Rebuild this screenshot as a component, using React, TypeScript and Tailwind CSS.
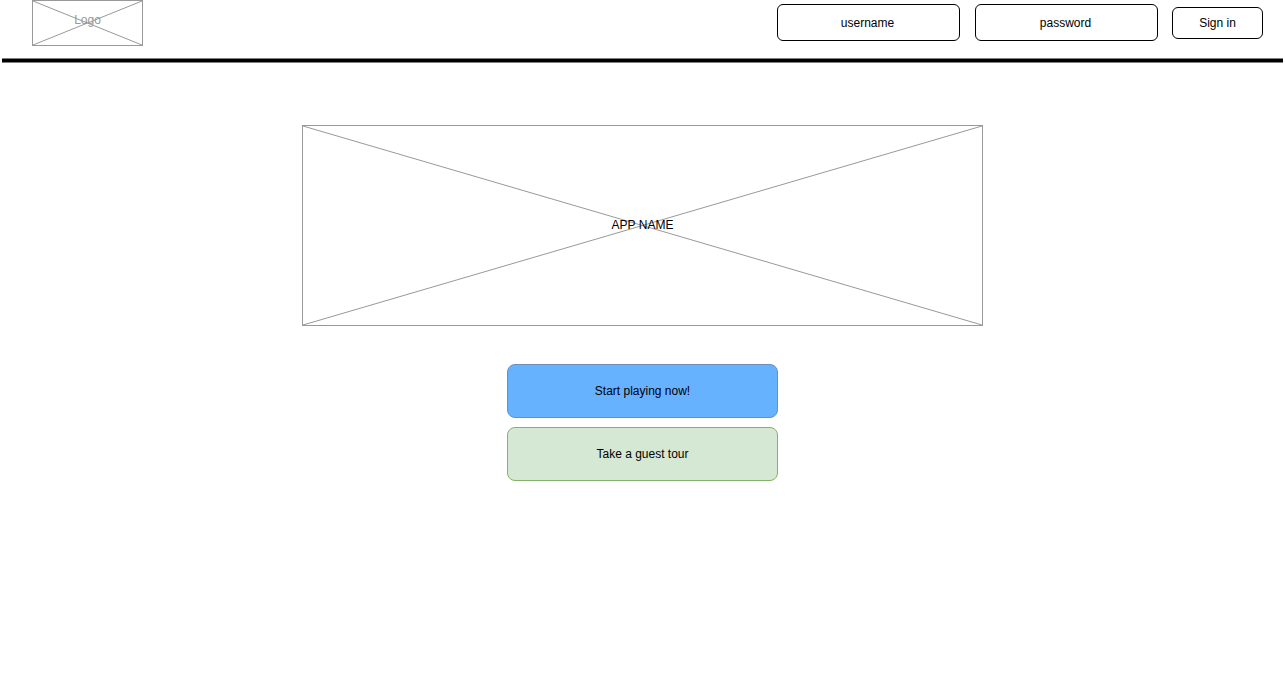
import type { ReactNode } from "react";

function Placeholder({ className, children }: { className: string; children: ReactNode }) {
  return (
    <div className={`relative flex items-center justify-center border border-[#999999] ${className}`}>
      <svg className="absolute inset-0 h-full w-full" aria-hidden="true" stroke="#999999">
        <line x1="0" y1="0" x2="100%" y2="100%" />
        <line x1="0" y1="100%" x2="100%" y2="0" />
      </svg>
      {children}
    </div>
  );
}

function Field({ id, label, type }: { id: string; label: string; type: string }) {
  return (
    <input
      id={id}
      name={id}
      type={type}
      aria-label={label}
      placeholder={label}
      className="h-[37px] w-[183px] rounded-md border border-black bg-white pr-0.5 text-center placeholder:text-black placeholder:opacity-100"
    />
  );
}

export default function App() {
  return (
    <div className="min-h-screen bg-white text-xs text-black [font-family:'Liberation_Sans',Arial,sans-serif]">
      <header className="mx-0.5">
        <div className="flex items-start justify-between pr-5 pb-3 pl-[30px]">
          <Placeholder className="h-[46px] w-[111px] pb-1.5">
            <span className="relative text-[#999999]">Logo</span>
          </Placeholder>
          <form className="flex items-center pt-1" onSubmit={(e) => e.preventDefault()}>
            <div className="flex gap-[15px]">
              <Field id="username" label="username" type="text" />
              <Field id="password" label="password" type="password" />
            </div>
            <button type="submit" className="ml-3.5 h-8 w-[91px] rounded-md border border-black bg-white">
              Sign in
            </button>
          </form>
        </div>
        <div className="h-[5px] border-y border-[#808080] bg-black" />
      </header>

      <main className="flex flex-col items-center px-4 pt-[62px]">
        <Placeholder className="h-[201px] w-full max-w-[681px] pb-0.5">
          <h1 className="relative">APP NAME</h1>
        </Placeholder>
        <div className="mt-[38px] flex w-full max-w-[271px] flex-col gap-[9px]">
          <button type="button" className="h-[54px] rounded-lg border border-[#6c8ebf] bg-[#66b2ff]">
            Start playing now!
          </button>
          <button type="button" className="h-[54px] rounded-lg border border-[#82b366] bg-[#d5e8d4]">
            Take a guest tour
          </button>
        </div>
      </main>
    </div>
  );
}
